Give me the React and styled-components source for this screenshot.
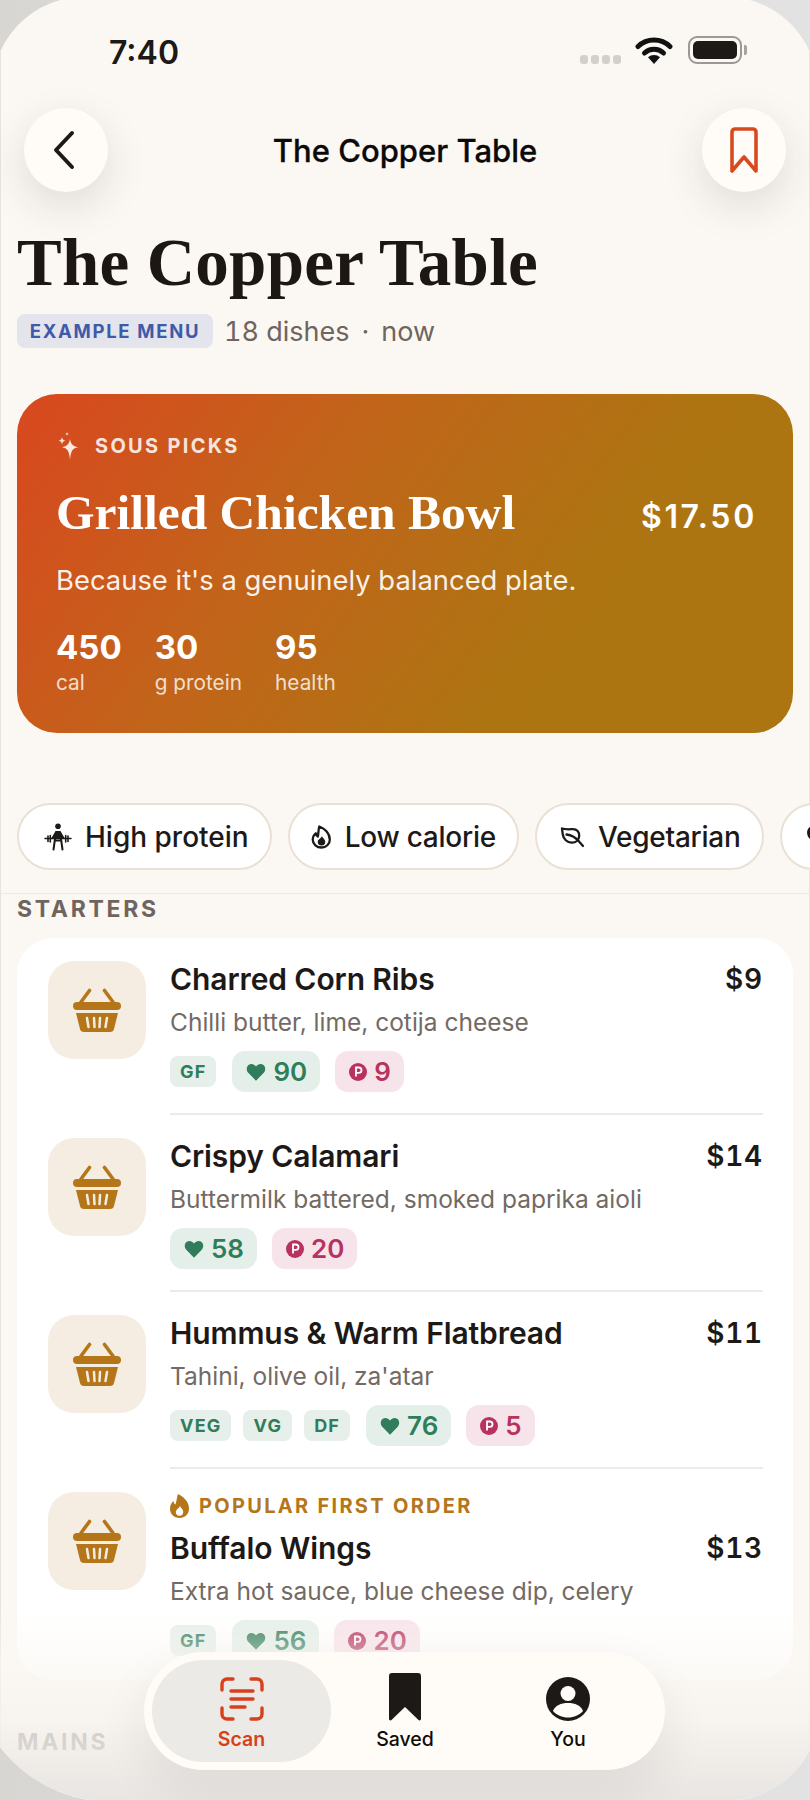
import React from 'react';
import styled, { createGlobalStyle } from 'styled-components';

const GlobalStyle = createGlobalStyle`
  html, body { margin: 0; padding: 0; background: #e1e1e1; }
  body { font-family: Inter, "Noto Sans", sans-serif; color: #1c1917; }
  * { box-sizing: border-box; }
`;

const Backdrop = styled.div`
  width: 810px;
  height: 1800px;
  background: linear-gradient(90deg, #d8d6d3 0%, #e0e0e0 50%, #e2e2e2 100%);
`;
// the frame is slightly overscanned in the shot, so the corners are cut arcs
const Phone = styled.div`
  position: relative;
  width: 810px;
  height: 1800px;
  overflow: hidden;
  background: #fbf8f3;
  box-shadow: inset 1px 0 0 #e6e4e1, inset -1px 0 0 #e6e4e1;
  clip-path: path('M0 52 A93 93 0 0 1 60 0 H750 A93 93 0 0 1 810 52 V1750 A93 93 0 0 1 738 1800 H133 A140 140 0 0 1 0 1747 Z');
`;
const StatusBar = styled.div`
  height: 108px;
  padding: 33px 68px 0 109px;
  display: flex;
  justify-content: space-between;
  align-items: flex-start;
`;
const Clock = styled.span`
  font-size: 32px;
  line-height: 40px;
  font-weight: 600;
`;
const StatusIcons = styled.div`
  display: flex;
  align-items: center;
  height: 40px;
  margin-top: -3px;
`;
const SignalDots = styled.div`
  display: flex;
  gap: 3px;
  margin: 18px 14px 0 0;
`;
const SignalDot = styled.span`
  width: 8px;
  height: 9px;
  border-radius: 3px;
  background: #d2d0cd;
`;
const Battery = styled.div`
  position: relative;
  width: 54px;
  height: 28px;
  margin-left: 15px;
  padding: 3px;
  border: 2px solid #9b9996;
  border-radius: 9px;
  &::after {
    content: '';
    position: absolute;
    right: -7px;
    top: 7px;
    width: 3px;
    height: 10px;
    border-radius: 0 2px 2px 0;
    background: #a5a3a0;
  }
`;
const BatteryFill = styled.div`
  height: 100%;
  border-radius: 5px;
  background: #1c1917;
`;
const TopBar = styled.div`
  height: 84px;
  padding: 0 24px;
  display: flex;
  align-items: center;
  justify-content: space-between;
`;
const RoundButton = styled.div`
  width: 84px;
  height: 84px;
  border-radius: 50%;
  background: #fffcf7;
  box-shadow: 0 14px 42px rgba(40, 30, 20, 0.13);
  display: flex;
  align-items: center;
  justify-content: center;
`;
const TopTitle = styled.div`
  font-size: 31px;
  font-weight: 500;
  color: #0c0a09;
  -webkit-text-stroke: 0.3px #0c0a09;
`;
const Heading = styled.h1`
  margin: 33px 0 0;
  padding-left: 17px;
  font-family: "Liberation Serif", serif;
  font-weight: 700;
  font-size: 67px;
  line-height: 74px;
  letter-spacing: 0.3px;
  color: #1c1712;
`;
const MetaRow = styled.div`
  margin-top: 14px;
  padding-left: 17px;
  height: 36px;
  display: flex;
  align-items: center;
  gap: 11px;
`;
const SampleBadge = styled.span`
  height: 34px;
  width: 196px;
  display: flex;
  align-items: center;
  justify-content: center;
  border-radius: 8px;
  background: #e4e4ec;
  color: #3f5aa8;
  font-size: 18.5px;
  font-weight: 700;
  letter-spacing: 1.7px;
`;
const MetaText = styled.span`
  font-size: 27px;
  font-variant-numeric: tabular-nums;
  color: #6f655e;
`;
const MetaDot = styled.span`
  margin: 0 12px;
`;
const PickCard = styled.section`
  margin: 45px 17px 0;
  height: 339px;
  padding: 35px 36px 35px 39px;
  border-radius: 40px;
  background: linear-gradient(125deg, #d9471f 0%, #c2641a 35%, #ae7412 68%, #ad7412 100%);
  color: #fff;
`;
const PickLabel = styled.div`
  display: flex;
  align-items: center;
  gap: 13px;
  height: 34px;
  font-size: 20px;
  font-weight: 700;
  letter-spacing: 2.3px;
  color: rgba(255, 255, 255, 0.86);
`;
const PickHead = styled.div`
  margin-top: 19px;
  display: flex;
  justify-content: space-between;
  align-items: center;
  height: 60px;
`;
const PickName = styled.div`
  font-family: "Liberation Serif", serif;
  font-weight: 700;
  font-size: 49.5px;
`;
const PickPrice = styled.div`
  margin-top: 8px;
  font-size: 32px;
  font-weight: 600;
  letter-spacing: 2.7px;
`;
const PickWhy = styled.div`
  margin-top: 19px;
  font-size: 27.4px;
  line-height: 38px;
  color: rgba(255, 255, 255, 0.92);
`;
const Stats = styled.div`
  margin-top: 28px;
  display: flex;
  gap: 33px;
`;
const Stat = styled.div`
  display: flex;
  flex-direction: column;
`;
const StatValue = styled.span`
  font-size: 33px;
  line-height: 40px;
  font-weight: 700;
`;
const StatLabel = styled.span`
  margin-top: 2px;
  font-size: 20.8px;
  line-height: 28px;
  color: rgba(255, 255, 255, 0.8);
`;
const ChipRow = styled.div`
  margin-top: 70px;
  padding-left: 17px;
  display: flex;
  gap: 16px;
  overflow: hidden;
`;
const Chip = styled.div`
  flex: none;
  height: 67px;
  padding: 0 21px 0 ${(p) => p.$left || 24}px;
  display: flex;
  align-items: center;
  gap: 13px;
  border: 2px solid #e9e0d6;
  border-radius: 34px;
  background: #fff;
  font-size: 28px;
  font-weight: 500;
  letter-spacing: ${(p) => (p.$tight ? '-0.25px' : '0')};
  color: #1c1917;
`;
const Rule = styled.div`
  margin-top: 23px;
  height: 1px;
  background: #eee9e3;
`;
const SectionTitle = styled.h2`
  margin: ${(p) => p.$gap || 0}px 0 0;
  padding-left: 17px;
  font-size: 23px;
  line-height: 30px;
  font-weight: 700;
  letter-spacing: 2.7px;
  color: #6f655e;
`;
const DishCard = styled.div`
  margin: 14px 17px 0;
  padding: 0 30px 0 31px;
  border-radius: 36px;
  background: #fff;
`;
const Dish = styled.div`
  height: ${(p) => (p.$tall ? 211 : 177)}px;
  padding-top: 23px;
  display: flex;
  gap: 24px;
`;
const Thumb = styled.div`
  flex: none;
  width: 98px;
  height: 98px;
  border-radius: 26px;
  background: #f5ede2;
  display: flex;
  align-items: center;
  justify-content: center;
`;
const DishBody = styled.div`
  flex: 1;
  height: 100%;
  border-bottom: ${(p) => (p.$last ? 'none' : '2px solid #ecebe8')};
`;
const Popular = styled.div`
  display: flex;
  align-items: center;
  gap: 10px;
  height: 24px;
  margin-top: 2px;
  margin-bottom: 12px;
  font-size: 20px;
  font-weight: 700;
  letter-spacing: 2.3px;
  color: #b5761a;
`;
const NameRow = styled.div`
  display: flex;
  justify-content: space-between;
  align-items: center;
  height: 36px;
`;
const DishName = styled.span`
  font-size: 30px;
  font-weight: 600;
  letter-spacing: -0.1px;
  color: #1c1917;
`;
const DishPrice = styled.span`
  font-size: 28px;
  font-weight: 600;
  font-variant-numeric: tabular-nums;
  letter-spacing: 0.8px;
`;
const DishDesc = styled.div`
  margin-top: 7px;
  font-size: 24.5px;
  line-height: 36px;
  color: #736a63;
`;
const Tags = styled.div`
  margin-top: 11px;
  display: flex;
  align-items: center;
  gap: 15px;
`;
const DietList = styled.div`
  display: flex;
  gap: 12px;
  margin-right: 1px;
`;
const DietTag = styled.span`
  height: 31px;
  padding: 0 10px;
  display: flex;
  align-items: center;
  border-radius: 8px;
  background: #e6efea;
  color: #2f7d5b;
  font-size: 18px;
  font-weight: 700;
  letter-spacing: 1.2px;
`;
const ScoreTag = styled.span`
  height: 41px;
  padding: 0 13px 0 14px;
  display: flex;
  align-items: center;
  gap: 7px;
  border-radius: 13px;
  background: ${(p) => p.$bg};
  color: ${(p) => p.$color};
  font-size: 26px;
  font-weight: 600;
`;
const NextCard = styled.div`
  margin: 34px 17px 0;
  height: 80px;
  border-radius: 36px;
  background: #fff;
`;
const Fade = styled.div`
  position: absolute;
  left: 0;
  right: 0;
  bottom: 0;
  height: 190px;
  background: linear-gradient(
    180deg,
    rgba(251, 248, 243, 0) 0%,
    rgba(251, 248, 243, 0.6) 28%,
    rgba(246, 243, 239, 0.74) 58%,
    rgba(231, 228, 225, 0.96) 100%
  );
`;
const BottomNav = styled.nav`
  position: absolute;
  left: 144px;
  top: 1652px;
  width: 521px;
  height: 118px;
  padding: 8px;
  display: flex;
  align-items: center;
  border-radius: 59px;
  background: #fffbf6;
  box-shadow: 0 18px 48px rgba(40, 30, 20, 0.08);
`;
const NavItem = styled.div`
  width: ${(p) => p.$w}px;
  height: 102px;
  display: flex;
  flex-direction: column;
  align-items: center;
  justify-content: flex-end;
  gap: 6px;
  padding-bottom: 11px;
  border-radius: 51px;
  background: ${(p) => (p.$active ? '#eceae6' : 'transparent')};
  color: ${(p) => (p.$active ? '#d8401c' : '#0f0d0b')};
  font-size: 19.5px;
  font-weight: ${(p) => (p.$active ? 600 : 500)};
  line-height: 24px;
`;
const BackShift = styled.span`
  display: flex;
  margin-right: 5px;
`;

const Chevron = () => (
  <svg width="24" height="40" viewBox="0 0 24 40" fill="none">
    <path d="M20 3 4 20l16 17" stroke="#1c1917" strokeWidth="4" strokeLinecap="round" strokeLinejoin="round" />
  </svg>
);
const BookmarkOutline = () => (
  <svg width="30" height="46" viewBox="0 0 30 46" fill="none">
    <path d="M3 5a3 3 0 0 1 3-3h18a3 3 0 0 1 3 3v39L15 30 3 44Z" stroke="#d9491f" strokeWidth="3.6" strokeLinejoin="round" />
  </svg>
);
const Wifi = () => (
  <svg width="38" height="28" viewBox="0 0 38 28">
    <path d="M3 10.5a23 23 0 0 1 32 0" fill="none" stroke="#111" strokeWidth="5" strokeLinecap="round" />
    <path d="M9.5 17a14 14 0 0 1 19 0" fill="none" stroke="#111" strokeWidth="5" strokeLinecap="round" />
    <path d="M13 21.2a9 9 0 0 1 12 0L19 28Z" fill="#111" />
  </svg>
);
const Sparkles = () => (
  <svg width="26" height="28" viewBox="0 0 26 28" fill="rgba(255,255,255,0.88)">
    <path d="M14 7c.8 5 2.8 7.2 8 8.2-5.2 1-7.2 3.2-8 12.3-.8-9.1-2.8-11.3-8-12.3 5.2-1 7.2-3.2 8-8.2Z" />
    <path d="M6 5c.3 2.4 1.2 3.3 3.4 3.7C7.2 9.1 6.3 10 6 12.4 5.7 10 4.8 9.1 2.6 8.7 4.8 8.3 5.7 7.4 6 5Z" />
    <path d="M11 0c.2 1.3.6 1.7 1.8 1.9-1.2.2-1.6.6-1.8 1.9-.2-1.3-.6-1.7-1.8-1.9C10.4 1.7 10.8 1.3 11 0Z" />
  </svg>
);
const Lifter = () => (
  <svg width="28" height="28" viewBox="0 0 28 28" fill="#1c1917" stroke="#1c1917" strokeLinecap="round">
    <circle cx="14" cy="3.2" r="2.8" stroke="none" />
    <path d="M1 15.5h26" strokeWidth="1.5" />
    <path d="M4 13v5.5M6.3 12.5v6.5M21.7 12.5v6.5M24 13v5.5" strokeWidth="1.6" />
    <path d="M7.5 15 11.5 8h5l4 7-3.6.8h-5.8Z" stroke="none" />
    <path d="M11 16 9.5 26.5M17 16l1.5 10.5M11 17.5h6" strokeWidth="2" fill="none" />
  </svg>
);
const FlameOutline = () => (
  <svg width="21" height="26" viewBox="0 0 24 28" fill="none">
    <path d="M9.5 2c5 1.800 12 7 12 15 0 5.200-4.200 9-9.500 9s-10-3.800-10-9c0-3.300 1.500-5.500 3.500-7.300.3 1.800 1 3 2.300 3.800C8.800 9.800 8.200 5.500 9.500 2Z" stroke="#1c1917" strokeWidth="2.6" strokeLinejoin="round" />
    <path d="M12.500 13c.8 2.200 3.800 3.400 3.800 6.400a4.300 4.300 0 0 1-8.600 0c0-2.700 3.500-3.600 4.800-6.400Z" fill="#1c1917" />
  </svg>
);
const LeafIcon = () => (
  <svg width="25" height="22" viewBox="0 0 25 22" fill="none" stroke="#1c1917" strokeWidth="2.3" strokeLinecap="round" strokeLinejoin="round">
    <path d="M2 2.500c4 1.200 7 .8 10.500.6 4.500-.2 7 3 6.700 7-.3 4-3.400 6.700-7.500 6.600C7 16.600 3.500 13 2.800 8.500 2.500 6.500 2.200 4.500 2 2.500Z" />
    <path d="M6.500 8.500c4 .4 8.500 2 13 7.500l3.500 4" />
  </svg>
);
const HeartFilled = ({ size = 20, color = '#2f7d5b' }) => (
  <svg width={size} height={size} viewBox="0 0 24 24" fill={color}>
    <path d="M12 22.500 3 13.300C.2 10.400.3 6 3 3.700c2.800-2.300 6.700-1.600 9 1.700 2.300-3.300 6.200-4 9-1.700 2.700 2.300 2.800 6.700 0 9.600Z" />
  </svg>
);
const ProteinDot = () => (
  <svg width="18" height="18" viewBox="0 0 18 18">
    <circle cx="9" cy="9" r="9" fill="#b8325f" />
    <path d="M7 13.500v-9h2.800a2.700 2.700 0 0 1 0 5.400H7" fill="none" stroke="#fff" strokeWidth="1.8" />
  </svg>
);
const Basket = () => (
  <svg width="48" height="44" viewBox="0 0 48 44" fill="#b5761a">
    <path d="M8 14 16.500 2.500M40 14 31.500 2.500" stroke="#b5761a" strokeWidth="3.6" strokeLinecap="round" />
    <rect x="0" y="14" width="48" height="8" rx="4" />
    <path d="M3 25h42l-4 16q-.6 3-4 3H11q-3.400 0-4-3Z" />
    <path d="M14 30l1.500 9M21 30l.5 9M27 30l-.5 9M34 30l-1.500 9" stroke="#f5ede2" strokeWidth="2.5" strokeLinecap="round" />
  </svg>
);
const FlameFilled = () => (
  <svg width="19" height="24" viewBox="0 0 19 24">
    <path d="M8 0c5 2.500 11 7 11 14.500C19 20 15 24 9.500 24S0 20 0 14.500C0 11 1.800 8.500 3.500 7c.2 1.700.8 2.800 2 3.500C6.500 7.500 6.800 3.500 8 0Z" fill="#b5761a" />
    <path d="M10 12c.6 2 3.200 3 3.200 6a3.700 3.700 0 0 1-7.400 0c0-2.400 3-3.400 4.200-6Z" fill="#fff" />
  </svg>
);
const ScanIcon = () => (
  <svg width="44" height="44" viewBox="0 0 44 44" fill="none" stroke="#d8401c" strokeWidth="3.4" strokeLinecap="round">
    <path d="M13 2H7a5 5 0 0 0-5 5v6M31 2h6a5 5 0 0 1 5 5v6M13 42H7a5 5 0 0 1-5-5v-6M31 42h6a5 5 0 0 0 5-5v-6" />
    <path d="M11 14h22M11 22h22M11 30h14" />
  </svg>
);
const BookmarkFilled = () => (
  <svg width="32" height="48" viewBox="0 0 32 48" fill="#1c1917">
    <path d="M0 3a3 3 0 0 1 3-3h26a3 3 0 0 1 3 3v43a1.500 1.500 0 0 1-2.500 1.100L16 34 2.500 47.100A1.500 1.500 0 0 1 0 46Z" />
  </svg>
);
const UserIcon = () => (
  <svg width="44" height="44" viewBox="0 0 44 44">
    <circle cx="22" cy="22" r="22" fill="#1c1917" />
    <circle cx="22" cy="16.500" r="7.500" fill="#fffbf6" />
    <path d="M7 34c2-5.500 8-8 15-8s13 2.500 15 8c-3.500 4-9 6.500-15 6.500S10.500 38 7 34Z" fill="#fffbf6" />
  </svg>
);

const starters = [
  { name: 'Charred Corn Ribs', price: '$9', desc: 'Chilli butter, lime, cotija cheese', diet: ['GF'], health: 90, protein: 9 },
  { name: 'Crispy Calamari', price: '$14', desc: 'Buttermilk battered, smoked paprika aioli', diet: [], health: 58, protein: 20 },
  { name: 'Hummus & Warm Flatbread', price: '$11', desc: "Tahini, olive oil, za'atar", diet: ['VEG', 'VG', 'DF'], health: 76, protein: 5 },
  { name: 'Buffalo Wings', price: '$13', desc: 'Extra hot sauce, blue cheese dip, celery', diet: ['GF'], health: 56, protein: 20, popular: true },
];

const stats = [
  { value: 450, label: 'cal' },
  { value: 30, label: 'g protein' },
  { value: 95, label: 'health' },
];

export default function App() {
  return (
    <Backdrop>
      <GlobalStyle />
      <Phone>
        <StatusBar>
          <Clock>7:40</Clock>
          <StatusIcons>
            <SignalDots>
              <SignalDot /><SignalDot /><SignalDot /><SignalDot />
            </SignalDots>
            <Wifi />
            <Battery><BatteryFill /></Battery>
          </StatusIcons>
        </StatusBar>
        <TopBar>
          <RoundButton><BackShift><Chevron /></BackShift></RoundButton>
          <TopTitle>The Copper Table</TopTitle>
          <RoundButton><BookmarkOutline /></RoundButton>
        </TopBar>
        <Heading>The Copper Table</Heading>
        <MetaRow>
          <SampleBadge>EXAMPLE MENU</SampleBadge>
          <MetaText>18 dishes<MetaDot>·</MetaDot>now</MetaText>
        </MetaRow>
        <PickCard>
          <PickLabel><Sparkles />SOUS PICKS</PickLabel>
          <PickHead>
            <PickName>Grilled Chicken Bowl</PickName>
            <PickPrice>$17.50</PickPrice>
          </PickHead>
          <PickWhy>Because it's a genuinely balanced plate.</PickWhy>
          <Stats>
            {stats.map((s) => (
              <Stat key={s.label}>
                <StatValue>{s.value}</StatValue>
                <StatLabel>{s.label}</StatLabel>
              </Stat>
            ))}
          </Stats>
        </PickCard>
        <ChipRow>
          <Chip $left={25}><Lifter />High protein</Chip>
          <Chip $left={21} $tight><FlameOutline />Low calorie</Chip>
          <Chip $left={23} $tight><LeafIcon />Vegetarian</Chip>
          <Chip><HeartFilled size={28} color="#1c1917" />Heart healthy</Chip>
        </ChipRow>
        <Rule />
        <SectionTitle>STARTERS</SectionTitle>
        <DishCard>
          {starters.map((d, i) => (
            <Dish key={d.name} $tall={d.popular}>
              <Thumb><Basket /></Thumb>
              <DishBody $last={i === starters.length - 1}>
                {d.popular && <Popular><FlameFilled />POPULAR FIRST ORDER</Popular>}
                <NameRow>
                  <DishName>{d.name}</DishName>
                  <DishPrice>{d.price}</DishPrice>
                </NameRow>
                <DishDesc>{d.desc}</DishDesc>
                <Tags>
                  {d.diet.length > 0 && (
                    <DietList>{d.diet.map((t) => <DietTag key={t}>{t}</DietTag>)}</DietList>
                  )}
                  <ScoreTag $bg="#e4efe9" $color="#2f7d5b"><HeartFilled />{d.health}</ScoreTag>
                  <ScoreTag $bg="#f7e3ea" $color="#b8325f"><ProteinDot />{d.protein}</ScoreTag>
                </Tags>
              </DishBody>
            </Dish>
          ))}
        </DishCard>
        <SectionTitle $gap={47}>MAINS</SectionTitle>
        <NextCard />
        <Fade />
        <BottomNav>
          <NavItem $w={179} $active><ScanIcon />Scan</NavItem>
          <NavItem $w={148}><BookmarkFilled />Saved</NavItem>
          <NavItem $w={178}><UserIcon />You</NavItem>
        </BottomNav>
      </Phone>
    </Backdrop>
  );
}
